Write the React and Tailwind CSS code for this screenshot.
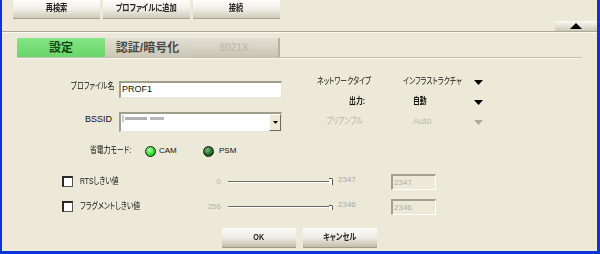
import React from 'react';

// narrow Japanese text to the bitmap font's width
const J = ({ children, className = '', origin = 'origin-left', scale = 'scale-x-[0.76]' }) => (
    <span className={`inline-block whitespace-nowrap ${origin} ${scale} ${className}`}>{children}</span>
);

const Tri = ({ color = '#000' }) => (
    <svg width="9" height="5" viewBox="0 0 9 5" className="block">
        <polygon points="0,0 9,0 4.5,5" fill={color} />
    </svg>
);

const TopButton = ({ children }) => (
    <button className="w-[87px] h-[19px] bg-gradient-to-b from-[#fdfdfb] via-[#f0eee6] to-[#cfcbb9] border-b border-[#a9a592] text-[9px] font-bold text-[#222] flex items-center justify-center">
        <J origin="origin-center" scale="scale-x-[0.8]">{children}</J>
    </button>
);

const Radio = ({ on }) => (
    <span
        className={`w-[11px] h-[11px] rounded-full border border-[#1a1a1a] ${on ? 'bg-[radial-gradient(circle_at_40%_35%,#b8ffb0,#25e025_55%,#0a9a0a)]' : 'bg-[radial-gradient(circle_at_40%_35%,#7fbf7f,#1d6b1d_55%,#0b3f0b)]'}`}
    />
);

const Checkbox = () => (
    <span className="w-[11px] h-[11px] border-t-2 border-l-2 border-[#2a2a2a] border-b border-r border-b-[#555] border-r-[#555] bg-white" />
);

const Slider = ({ small }) => (
    <div className="ml-[7px] w-[105px] flex items-center">
        <div className="flex-1 h-[2px] border-t border-[#6b6a60] bg-white" />
        <div className={`${small ? 'h-[5px] mt-[2px]' : 'h-[7px]'} w-[4px] border-t border-r border-[#555] bg-white rounded-tr-[2px]`} />
    </div>
);

const ThresholdRow = ({ label, min, max, small, className = '' }) => (
    <div className={`h-[17px] flex items-center pl-[60px] ${className}`}>
        <Checkbox />
        <span className="ml-[7px] w-[108px] text-[9px] text-[#111]"><J>{label}</J></span>
        <span className="w-[33px] text-right text-[8px] text-[#b4b2a8]">{min}</span>
        <Slider small={small} />
        <span className="ml-[5px] w-[53px] text-[8px] text-[#a8a69c] self-start mt-[1px]">{max}</span>
        <div className="w-[45px] h-[16px] border-t-2 border-l-2 border-[#a2a091] border-b border-r border-b-white border-r-white text-[8px] text-[#b0aea4] pl-[1px] leading-[13px]">
            {max}
        </div>
    </div>
);

const BottomButton = ({ children }) => (
    <button className="w-[74px] h-[20px] bg-gradient-to-b from-[#fbfbf8] via-[#eeece2] to-[#c2bead] border-b border-[#9e9a86] text-[9px] font-bold text-[#222] flex items-center justify-center">
        <J origin="origin-center" scale="scale-x-[0.8]">{children}</J>
    </button>
);

export default function App() {
    return (
        <div className="w-[600px] h-[254px] bg-[#ECE9D8] border-l-2 border-r-[3px] border-b-[3px] border-[#0b35d4] flex flex-col font-['Liberation_Sans','Noto_Sans_CJK_JP',sans-serif] [font-feature-settings:'palt'] overflow-hidden">
            {/* toolbar */}
            <div className="h-[20px] flex gap-[3px] pl-[11px]">
                <TopButton>再検索</TopButton>
                <TopButton>プロファイルに追加</TopButton>
                <TopButton>接続</TopButton>
            </div>
            <div className="h-[11px] flex justify-end">
                <button className="mt-[1px] w-[42px] h-[10px] bg-gradient-to-b from-[#fbfbf6] to-[#cdc9b8] flex items-center justify-center">
                    <svg width="12" height="6" viewBox="0 0 12 6" className="block">
                        <polygon points="0,6 12,6 6,0" fill="#000" />
                    </svg>
                </button>
            </div>
            <div className="h-[2px] border-t border-[#aca899] bg-[#fbfaf5]" />

            {/* tabs */}
            <div className="mt-[5px] ml-[15px] flex h-[19px]">
                <div className="w-[88px] bg-gradient-to-b from-[#86e486] to-[#68d668] flex items-center justify-center text-[12px] font-bold text-[#0f4a0f]">設定</div>
                <div className="w-[85px] bg-gradient-to-b from-[#e3e0d4] to-[#cbc7b6] flex items-center justify-center text-[12px] font-bold text-[#4a4a44] whitespace-nowrap">認証/暗号化</div>
                <div className="w-[90px] bg-gradient-to-b from-[#e3e0d4] to-[#c9c5b3] border-r-2 border-[#b5b19f] flex items-center justify-center text-[10px] text-[#b9b6ab]">8021X</div>
            </div>
            <div className="ml-[15px] w-[565px] h-[2px] border-t border-[#c4c0ae] bg-[#f7f6f0]" />

            {/* form */}
            <div className="flex">
                <div className="w-[298px] flex flex-col mt-[22px]">
                    <div className="h-[17px] flex items-center">
                        <span className="w-[112px] text-right text-[9px] text-[#111] self-start -mt-[1px]">
                            <J origin="origin-right">プロファイル名</J>
                        </span>
                        <div className="ml-[5px] w-[163px] h-[17px] bg-white border-t-2 border-l-2 border-[#a09d8d] border-b border-r border-b-[#e8e6dc] border-r-[#e8e6dc] text-[9px] leading-[13px] pl-[1px] text-[#111]">
                            PROF1
                        </div>
                    </div>
                    <div className="mt-[14px] h-[20px] flex items-start">
                        <span className="w-[110px] text-right text-[9px] text-[#111] mt-[1px]">BSSID</span>
                        <div className="ml-[7px] w-[163px] h-[20px] bg-white border-t-2 border-l-2 border-[#a09d8d] border-b border-r border-b-[#e8e6dc] border-r-[#e8e6dc] flex">
                            <div className="flex-1 flex items-start pt-[3px] pl-[1px] gap-[1px]">
                                <div className="w-[2px] h-[7px] bg-[#c8c8c8] blur-[0.5px] -mt-[2px]" />
                                <div className="w-[22px] h-[3px] bg-[#b0b0b0] blur-[0.6px]" />
                                <div className="w-[14px] h-[3px] bg-[#b8b8b8] blur-[0.6px] ml-[2px]" />
                            </div>
                            <div className="w-[12px] h-[17px] bg-[#ece9d8] border-t border-l border-white border-b border-r border-b-[#6d6b62] border-r-[#6d6b62] flex items-center justify-center">
                                <svg width="5" height="3" viewBox="0 0 5 3" className="block">
                                    <polygon points="0,0 5,0 2.5,3" fill="#000" />
                                </svg>
                            </div>
                        </div>
                    </div>
                    <div className="mt-[13px] h-[12px] flex items-center pl-[88px]">
                        <span className="w-[55px] text-[9px] text-[#111]"><J>省電力モード:</J></span>
                        <div className="w-[58px] flex items-center">
                            <Radio on />
                            <span className="ml-[3px] text-[8px] text-[#111]">CAM</span>
                        </div>
                        <Radio />
                        <span className="ml-[5px] text-[8px] text-[#111]">PSM</span>
                    </div>
                </div>

                <div className="flex flex-col mt-[13px]">
                    <div className="h-[20px] flex items-center">
                        <span className="w-[65px] text-right text-[9px] text-[#111]"><J origin="origin-right">ネットワークタイプ</J></span>
                        <span className="ml-[38px] w-[71px] text-[9px] text-[#111]"><J>インフラストラクチャ</J></span>
                        <Tri />
                    </div>
                    <div className="h-[20px] flex items-center">
                        <span className="w-[65px] text-right text-[9px] font-bold text-[#111]"><J origin="origin-right">出力:</J></span>
                        <span className="ml-[48px] w-[61px] text-[9px] font-bold text-[#111]"><J>自動</J></span>
                        <Tri />
                    </div>
                    <div className="h-[20px] flex items-center">
                        <span className="w-[63px] text-right text-[9px] text-[#b2b0a6]"><J origin="origin-right">プリアンブル</J></span>
                        <span className="ml-[50px] w-[61px] text-[9px] text-[#b8b6ac]">Auto</span>
                        <Tri color="#aeaca2" />
                    </div>
                </div>
            </div>

            {/* thresholds */}
            <ThresholdRow className="mt-[16px]" label="RTSしきい値" min="0" max="2347" />
            <ThresholdRow className="mt-[8px]" label="フラグメントしきい値" min="256" max="2346" small />

            {/* actions */}
            <div className="mt-[13px] flex justify-center gap-[7px]">
                <BottomButton>OK</BottomButton>
                <BottomButton>キャンセル</BottomButton>
            </div>
        </div>
    );
}
